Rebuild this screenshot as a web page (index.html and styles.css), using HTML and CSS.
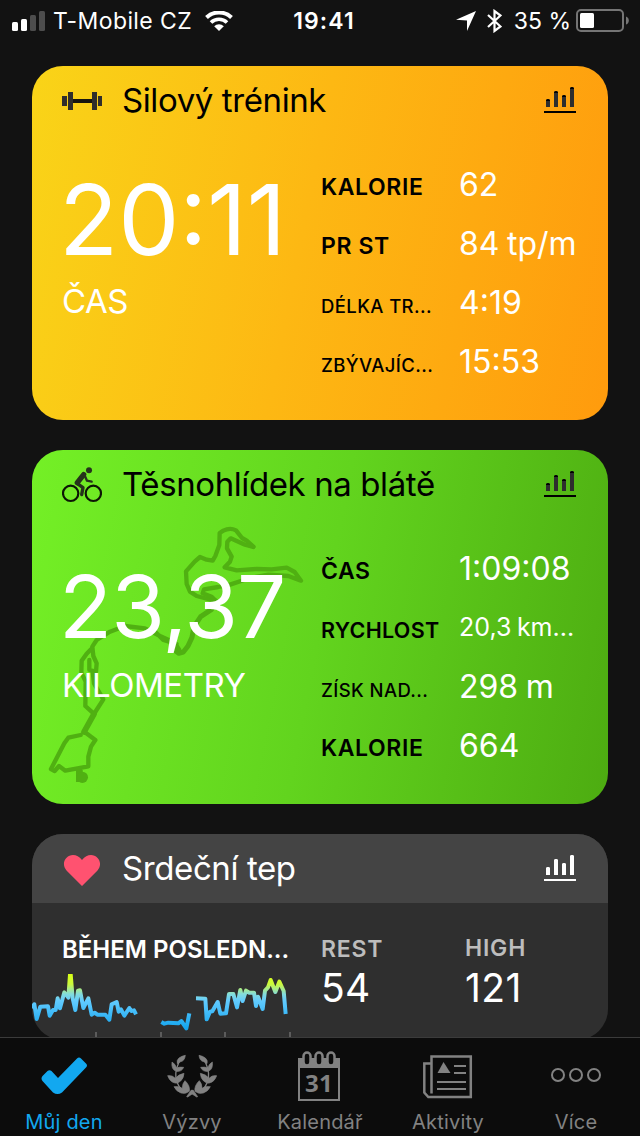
FILE: index.html
```html
<!DOCTYPE html>
<html lang="cs">

<head>
    <meta charset="UTF-8">
    <meta name="viewport" content="width=device-width, initial-scale=1.0">
    <title>Můj den</title>
    <link rel="stylesheet" href="styles.css">
</head>

<body>
    <!-- Shared icon -->
    <svg class="defs" width="0" height="0">
        <symbol id="bars" viewBox="0 0 32 26">
            <path d="M2 20v-6.500a2 1.500 0 0 1 4 0V20zM10 20V5.500a2 1.500 0 0 1 4 0V20zM18 20V9.500a2 1.500 0 0 1 4 0V20zM26 20V1.500a2 1.500 0 0 1 4 0V20z" fill="var(--bar)"/>
            <path d="M2 14v-.5a2 1.500 0 0 1 4 0v.5zM10 6v-.5a2 1.500 0 0 1 4 0v.5zM18 10v-.5a2 1.500 0 0 1 4 0v.5zM26 2v-.5a2 1.500 0 0 1 4 0v.5zM0 24h32v2H0z" fill="currentColor"/>
        </symbol>
    </svg>

    <div class="screen">
        <!-- Status bar -->
        <header class="status">
            <div class="status-left">
                <svg width="34" height="20" viewBox="0 0 34 20">
                    <rect x="0" y="11" width="6" height="9" rx="1.500" fill="#fff"/>
                    <rect x="9" y="8" width="6" height="12" rx="1.500" fill="#fff"/>
                    <rect x="18" y="4" width="6" height="16" rx="1.500" fill="#4d4d4d"/>
                    <rect x="27" y="0" width="6" height="20" rx="1.500" fill="#4d4d4d"/>
                </svg>
                <span class="carrier">T-Mobile CZ</span>
                <svg width="28" height="20" viewBox="0 0 28 20">
                    <path d="M1.500 6.500a18 18 0 0 1 25 0" fill="none" stroke="#fff" stroke-width="4"/>
                    <path d="M6 11.500a11.500 11.500 0 0 1 16 0" fill="none" stroke="#fff" stroke-width="3.700"/>
                    <path d="M14 20l-4.800-4.800a6.800 6.800 0 0 1 9.600 0z" fill="#fff"/>
                </svg>
            </div>
            <div class="clock">19:41</div>
            <div class="status-right">
                <svg width="20" height="20" viewBox="0 0 20 20"><path d="M20 0L11 20V9.500L0 8.700z" fill="#fff"/></svg>
                <svg width="15" height="24" viewBox="0 0 15 24"><path d="M1 6l12.500 11.500L7.500 22V2l6 4.500L1 18" fill="none" stroke="#fff" stroke-width="2.200"/></svg>
                <span class="percent">35 %</span>
                <svg width="53" height="23" viewBox="0 0 53 23">
                    <rect x="1" y="1" width="46" height="21" rx="4" fill="none" stroke="#757575" stroke-width="2"/>
                    <rect x="4" y="4" width="14" height="15" rx="1.500" fill="#fff"/>
                    <path d="M50 7.500q2.800 1 2.800 4t-2.800 4z" fill="#757575"/>
                </svg>
            </div>
        </header>

        <main class="cards">
            <!-- Strength training -->
            <section class="card orange">
                <div class="card-head">
                    <svg class="icon" width="40" height="36" viewBox="0 0 40 36">
                        <path d="M0 13h5v10H0zM6 9h5v18H6zM30 9h5v18h-5zM36 13h4v10h-4z" fill="#302e2b"/>
                        <path d="M11 16h19v4H11z" fill="#17150f"/>
                    </svg>
                    <h2 class="title">Silový trénink</h2>
                    <svg class="bars" width="32" height="26"><use href="#bars"/></svg>
                </div>
                <div class="card-body">
                    <div class="main-value">
                        <div class="big time">20:11</div>
                        <div class="unit">ČAS</div>
                    </div>
                    <div class="stats">
                        <div class="stat"><span class="label">KALORIE</span><span class="value">62</span></div>
                        <div class="stat"><span class="label">PR ST</span><span class="value">84 tp/m</span></div>
                        <div class="stat"><span class="label small">DÉLKA TR...</span><span class="value">4:19</span></div>
                        <div class="stat"><span class="label small">ZBÝVAJÍC...</span><span class="value">15:53</span></div>
                    </div>
                </div>
            </section>

            <!-- Bike ride -->
            <section class="card green">
                <svg class="route" viewBox="6 0 1728 1062">
                    <g fill="none" stroke="#50b012" stroke-width="13" stroke-linejoin="round" stroke-linecap="round">
                        <path d="M670 290L650 272 636 264 618 241Q600 232 580 242L569 249 568 285 556 318 548 332 530 329 510 321 494 335 468 364 470 402 480 425 500 438 545 450"/>
                        <path d="M670 291L645 284 602 265 592 275 591 295 605 320 600 335 584 352 620 361 680 357 725 358 770 353 794 366 813 392 775 378 715 374 660 384 600 404 565 411 522 418 518 430 545 440 558 453"/>
                        <path d="M556 453L545 478 512 500 492 530 486 562 474 588 460 606 446 610 434 601" stroke-width="15"/>
                        <path d="M448 600L434 578 390 558 345 535 285 528 240 545 200 570 187 590 190 618 200 640 198 665 178 660 178 630M440 582L400 570 365 535"/>
                        <path d="M186 595L170 611 155 632 154 668 167 695 166 768 188 788M188 665L192 700 220 748 190 795"/>
                        <path d="M192 792L162 846" stroke-width="17"/>
                        <path d="M152 855L115 863 103 880 63 957 74 963 87 948 106 962 175 949 175 920 183 890 196 870 164 846M150 956V975"/>
                    </g>
                    <rect x="138" y="960" width="20" height="36" fill="#50b012"/>
                    <circle cx="157" cy="982" r="17" fill="#50b012"/>
                </svg>
                <div class="card-head">
                    <svg class="icon" width="40" height="36" viewBox="96 50 120 108">
                        <g fill="none" stroke="#0d1605" stroke-width="6.500">
                            <circle cx="122" cy="129" r="23"/>
                            <circle cx="190" cy="129" r="23"/>
                        </g>
                        <g fill="none" stroke="#26321c" stroke-linejoin="round" stroke-linecap="round">
                            <path d="M161 73L142 97" stroke-width="16"/>
                            <path d="M141 99L159 112 155 133" stroke-width="10"/>
                            <path d="M163 73L171 91 185 94" stroke-width="7"/>
                        </g>
                        <circle cx="177" cy="60" r="9" fill="#26321c"/>
                    </svg>
                    <h2 class="title">Těsnohlídek na blátě</h2>
                    <svg class="bars" width="32" height="26"><use href="#bars"/></svg>
                </div>
                <div class="card-body">
                    <div class="main-value">
                        <div class="big distance">23,37</div>
                        <div class="unit">KILOMETRY</div>
                    </div>
                    <div class="stats">
                        <div class="stat"><span class="label">ČAS</span><span class="value">1:09:08</span></div>
                        <div class="stat"><span class="label medium">RYCHLOST</span><span class="value medium">20,3 km...</span></div>
                        <div class="stat"><span class="label small">ZÍSK NAD...</span><span class="value">298 m</span></div>
                        <div class="stat"><span class="label">KALORIE</span><span class="value">664</span></div>
                    </div>
                </div>
            </section>

            <!-- Heart rate -->
            <section class="card heart">
                <div class="card-head">
                    <svg class="icon" width="40" height="36" viewBox="0 0 40 36"><path d="M20 35L4.500 19.500C-1.500 12.500 4 4 11 4q5 0 9 5 4-5 9-5c7 0 12.500 8.500 6.500 15.500z" fill="#ff5270"/></svg>
                    <h2 class="title">Srdeční tep</h2>
                    <svg class="bars" width="32" height="26"><use href="#bars"/></svg>
                </div>
                <div class="heart-body">
                    <div class="heart-chart">
                        <div class="chart-label">BĚHEM POSLEDN...</div>
                        <svg width="260" height="66" viewBox="36 432 780 198">
                            <defs>
                                <linearGradient id="pulse" gradientUnits="userSpaceOnUse" x1="0" y1="432" x2="0" y2="600">
                                    <stop offset="0" stop-color="#d8ff14"/>
                                    <stop offset=".18" stop-color="#ccf93c"/>
                                    <stop offset=".36" stop-color="#83dcdc"/>
                                    <stop offset=".48" stop-color="#62cbff"/>
                                    <stop offset="1" stop-color="#10a4ee"/>
                                </linearGradient>
                            </defs>
                            <g fill="none" stroke="url(#pulse)" stroke-width="12" stroke-linejoin="round">
                                <path d="M36 535L43 523 50 567 61 530 84 529 89 557 99 540 107 540 113 505 120 535 133 487 145 503 151 420 158 505 166 540 174 482 180 481 190 534 205 505 215 554 224 548 232 554 256 554 268 569 275 523 290 516 296 545 303 538 313 557 328 534 334 543 342 541 348 553"/>
                                <path d="M424 576L433 581 445 578 475 580 484 573 499 595 508 550"/>
                                <path d="M528 505L556 506 560 568 570 545 577 544 593 516 601 551 618 550 627 492 640 492 651 532 661 480 668 513 678 482 688 488 702 488 708 528 714 500 728 537 735 482 744 472 752 450 766 486 778 455 791 483 797 552"/>
                            </g>
                            <path d="M225 606h6v24h-6zM420 606h6v24h-6zM612 606h6v24h-6zM807 606h6v24h-6z" fill="#5c5c5c"/>
                        </svg>
                    </div>
                    <div class="pulse-stat">
                        <div class="pulse-label">REST</div>
                        <div class="pulse-value">54</div>
                    </div>
                    <div class="pulse-stat">
                        <div class="pulse-label high">HIGH</div>
                        <div class="pulse-value">121</div>
                    </div>
                </div>
            </section>
        </main>

        <!-- Bottom tabs -->
        <nav class="tabs">
            <a class="tab active">
                <svg width="50" height="52" viewBox="0 0 50 52"><path d="M3.500 26l5-5q2-1.500 4 0l6.500 7L38 8.500q2-2 4 0l5 5q2 2 0 4L23 42.500q-4.500 3-9 0L3.500 31q-2-2.500 0-5z" fill="currentColor"/></svg>
                <span>Můj den</span>
            </a>
            <a class="tab">
                <svg width="50" height="52" viewBox="500 46 150 156">
                    <g id="branch" fill="currentColor" stroke="currentColor" stroke-width="2" stroke-linejoin="round">
                        <path d="M555 62q-2 17-14 19l-10 6q-3-10 5-17 8-6 19-8z"/>
                        <path d="M515 82q11 6 13 18 9-4 22-2-6 14-22 12-16-5-13-28z"/>
                        <path d="M502 123q15-2 23 8 9-12 26-15-1 15-10 23-8 8-17 6-15-3-22-22z"/>
                        <path d="M521 156q14-3 25 5 0-15 8-23 16 15 13 32-10 9-25 5-14-5-21-19z"/>
                        <path d="M559 186l13-19h5v10l-15 10z"/>
                        <path d="M536 82q-16 35-6 61 4 12 16 24" fill="none" stroke-width="4"/>
                    </g>
                    <use href="#branch" transform="translate(1151 0) scale(-1 1)"/>
                </svg>
                <span>Výzvy</span>
            </a>
            <a class="tab">
                <svg width="50" height="52" viewBox="0 0 50 52">
                    <path d="M3 8h42v43H3z" fill="currentColor"/>
                    <path d="M5 18h38v31H5z" fill="#0c0c0c"/>
                    <g fill="#0c0c0c" stroke="currentColor" stroke-width="2.500">
                        <rect x="8.500" y="2.500" width="7" height="13" rx="3.500"/>
                        <rect x="20.500" y="2.500" width="7" height="13" rx="3.500"/>
                        <rect x="32.500" y="2.500" width="7" height="13" rx="3.500"/>
                    </g>
                    <text class="cal-day" x="24" y="41.500">31</text>
                </svg>
                <span>Kalendář</span>
            </a>
            <a class="tab">
                <svg width="50" height="52" viewBox="0 0 50 52">
                    <path d="M7.500 13.500H1.300v29l4 4.500h42.500V6.500H8.500v37" fill="none" stroke="currentColor" stroke-width="2.500"/>
                    <path d="M20.500 12l7 11h-13z" fill="currentColor"/>
                    <path d="M31 16h12M31 23h12M14 32h29M14 39h29" stroke="currentColor" stroke-width="2"/>
                </svg>
                <span>Aktivity</span>
            </a>
            <a class="tab">
                <svg width="52" height="52" viewBox="0 0 52 52">
                    <g fill="none" stroke="currentColor" stroke-width="2">
                        <circle cx="8" cy="25" r="6"/>
                        <circle cx="26" cy="25" r="6"/>
                        <circle cx="44" cy="25" r="6"/>
                    </g>
                </svg>
                <span>Více</span>
            </a>
        </nav>
    </div>
</body>

</html>
```

FILE: styles.css
```css
body {
    margin: 0;
    background: #121212;
    color: #fff;
    font-family: Inter, "Liberation Sans", sans-serif;
}

svg {
    display: block;
    flex: none;
}

.defs {
    display: none;
}

.screen {
    width: 640px;
    height: 1136px;
    display: flex;
    flex-direction: column;
    overflow: hidden;
}

/* Status bar */
.status {
    height: 41px;
    flex: none;
    display: grid;
    grid-template-columns: 1fr auto 1fr;
    align-items: center;
    padding: 0 11px 0 12px;
    font-size: 23px;
    white-space: nowrap;
}

.status-left,
.status-right {
    display: flex;
    align-items: center;
}

.status-right {
    justify-content: flex-end;
}

.carrier {
    margin: 0 13px 0 7px;
    letter-spacing: 0.4px;
}

.clock {
    padding-left: 7px;
    font-weight: 600;
    letter-spacing: 1.1px;
}

.status-right svg:nth-child(2) {
    margin: 0 12px 0 11px;
}

.percent {
    margin-right: 5px;
}

/* Cards */
.cards {
    flex: 1;
    min-height: 0;
    overflow: hidden;
    padding: 25px 32px 0;
    display: flex;
    flex-direction: column;
    gap: 30px;
}

.card {
    position: relative;
    flex: none;
    height: 354px;
    border-radius: 31px;
    overflow: hidden;
    color: #000;
    --bar: #2e2e2e;
}

.orange {
    background: linear-gradient(101deg, #f9d418 0%, #fdb813 47%, #ff9b0d 100%);
}

.green {
    background: linear-gradient(101deg, #74f026 0%, #62d41e 50%, #4dac11 100%);
}

.heart {
    height: 206px;
    background: #2f2f2f;
    color: #fff;
    --bar: #fff;
}

.card-head {
    position: relative;
    height: 69px;
    display: flex;
    align-items: center;
    padding: 0 32px 0 30px;
}

.heart .card-head {
    background: #444;
}

.title {
    flex: 1;
    margin: 0 0 0 20px;
    font-size: 33px;
    font-weight: 400;
    letter-spacing: -0.4px;
    line-height: 69px;
    white-space: nowrap;
}

.bars {
    margin-bottom: 1px;
}

.card-body {
    position: relative;
    display: grid;
    grid-template-columns: 258px 1fr;
    padding: 19px 0 0 31px;
    color: #fff;
    white-space: nowrap;
}

.big {
    height: 110px;
    margin-left: -4px;
}

.time {
    font-size: 97px;
    line-height: 132px;
}

.distance {
    font-size: 87px;
    line-height: 138px;
    letter-spacing: -0.8px;
}

.unit {
    margin-left: -1px;
    font-size: 33px;
    line-height: 74px;
    letter-spacing: -0.5px;
}

.stat {
    height: 59px;
    display: grid;
    grid-template-columns: 138px 1fr;
    align-items: start;
}

.label {
    color: #000;
    font-size: 23px;
    font-weight: 600;
    line-height: 66px;
    letter-spacing: 0.6px;
}

.label.medium {
    font-size: 21.5px;
    line-height: 67px;
    letter-spacing: 0.3px;
}

.label.small {
    font-size: 18.5px;
    font-weight: 500;
    line-height: 68px;
    letter-spacing: 0.4px;
}

.value {
    font-size: 32px;
    line-height: 61px;
    word-spacing: -1.5px;
}

.value.medium {
    font-size: 25px;
}

.route {
    position: absolute;
    left: 0;
    top: 0;
    width: 576px;
    height: 354px;
}

/* Heart rate */
.heart-body {
    display: grid;
    grid-template-columns: 289px 144px 1fr;
    padding-top: 31px;
}

.chart-label {
    padding-left: 30px;
    height: 40px;
    line-height: 32px;
    font-size: 24px;
    font-weight: 600;
    white-space: nowrap;
}

.pulse-label {
    height: 30px;
    color: #bdbdbd;
    font-size: 23px;
    font-weight: 600;
    line-height: 31px;
    letter-spacing: 0.8px;
}

.pulse-label.high {
    line-height: 29px;
}

.pulse-value {
    font-size: 39px;
    line-height: 48px;
    letter-spacing: 0.4px;
}

/* Bottom tabs */
.tabs {
    height: 98px;
    flex: none;
    display: grid;
    grid-template-columns: repeat(5, 128px);
    border-top: 1px solid #3b3b3b;
    background: #0c0c0c;
    color: #828282;
}

.tab {
    display: flex;
    flex-direction: column;
    align-items: center;
    padding-top: 12px;
    font-size: 20px;
    line-height: 24px;
    letter-spacing: 0.2px;
}

.tab span {
    margin-top: 8px;
}

.active {
    color: #12a8f0;
}

.cal-day {
    font: 700 24px "Open Sans", sans-serif;
    text-anchor: middle;
    fill: currentColor;
}
```
